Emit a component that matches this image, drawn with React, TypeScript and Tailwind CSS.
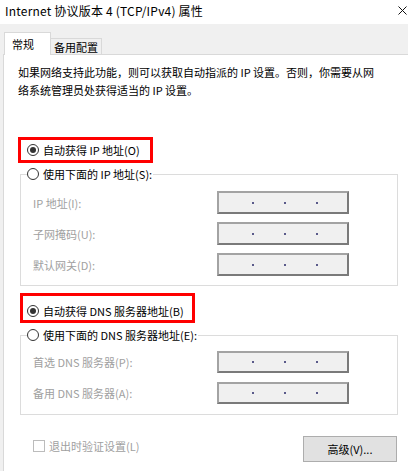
import React from "react";

function Radio({ checked }: { checked?: boolean }) {
  return (
    <span className="w-[12px] h-[12px] rounded-full border border-[#333333] bg-white flex items-center justify-center shrink-0">
      {checked && <span className="w-[6px] h-[6px] rounded-full bg-[#333333]" />}
    </span>
  );
}

function IpBox({ h }: { h: string }) {
  return (
    <div
      className={`w-[132px] ${h} bg-[#f0f0f0] border-2 border-[#a3a3a3] border-r-[#7a7a7a] border-b-[#7a7a7a] flex items-center pl-[33px] gap-[30px]`}
    >
      <span className="w-[2px] h-[2px] bg-[#5a5a8a]" />
      <span className="w-[2px] h-[2px] bg-[#5a5a8a]" />
      <span className="w-[2px] h-[2px] bg-[#5a5a8a]" />
    </div>
  );
}

export default function App() {
  return (
    <div className="w-[408px] h-[471px] overflow-hidden bg-[#f0f0f0] text-black text-[11px] leading-[16px] font-['Noto_Sans_CJK_SC',sans-serif]">
      {/* title bar */}
      <div className="h-[24px] bg-white flex items-center justify-between pl-[5px] pr-[1px]">
        <span className="text-[12px] leading-[16px] -mt-[2px] tracking-[0.2px]">Internet 协议版本 4 (TCP/IPv4) 属性</span>
        <svg width="9" height="9" viewBox="0 0 9 9" className="-mt-[4px]">
          <path d="M0.5 0.5 L8.5 8.5 M8.5 0.5 L0.5 8.5" stroke="#111" strokeWidth="1" />
        </svg>
      </div>

      {/* tabs */}
      <div className="h-[30px] flex items-end pl-[4px]">
        <div className="relative z-10 -mb-px h-[23px] w-[47px] bg-white border border-b-0 border-[#d9d9d9] pl-[7px] pt-[3px]">
          常规
        </div>
        <div className="h-[16px] w-[51px] bg-[#f0f0f0] border border-l-0 border-b-0 border-[#d9d9d9] flex items-center justify-center">
          备用配置
        </div>
      </div>

      {/* panel */}
      <div className="ml-[3px] h-[420px] bg-white border-t border-l border-[#d9d9d9] pl-[14px] pt-[8px]">
        <p className="leading-[18px] w-[360px]">
          如果网络支持此功能，则可以获取自动指派的 IP 设置。否则，你需要从网络系统管理员处获得适当的 IP 设置。
        </p>

        <div className="mt-[38px] w-[135px] h-[26px] border-[3px] border-[#ff0000] pl-[6px] pt-[2px]">
          <div className="h-[16px] flex items-center gap-[4px]">
            <Radio checked />
            <span>自动获得 IP 地址(O)</span>
          </div>
        </div>

        <fieldset className="mt-[3px] ml-[2px] w-[378px] border border-[#dcdcdc] pb-[9px]">
          <legend className="ml-[6px] h-[16px] flex items-center gap-[4px] pr-[1px]">
            <Radio />
            <span>使用下面的 IP 地址(S):</span>
          </legend>
          <div className="mt-[9px] flex flex-col gap-[8px]">
            <div className="flex items-center">
              <span className="w-[196px] pl-[12px] text-[#a0a0a0]">IP 地址(I):</span>
              <IpBox h="h-[23px]" />
            </div>
            <div className="flex items-center">
              <span className="w-[196px] pl-[12px] text-[#a0a0a0]">子网掩码(U):</span>
              <IpBox h="h-[23px]" />
            </div>
            <div className="flex items-center">
              <span className="w-[196px] pl-[12px] text-[#a0a0a0]">默认网关(D):</span>
              <IpBox h="h-[23px]" />
            </div>
          </div>
        </fieldset>

        <div className="mt-[7px] ml-[2px] w-[175px] h-[30px] border-[3px] border-[#ff0000] pl-[4px] pt-[7px]">
          <div className="h-[16px] flex items-center gap-[4px]">
            <Radio checked />
            <span>自动获得 DNS 服务器地址(B)</span>
          </div>
        </div>

        <fieldset className="mt-[4px] ml-[2px] w-[378px] border border-[#dcdcdc] pb-[10px]">
          <legend className="ml-[6px] h-[16px] flex items-center gap-[4px] pr-[1px]">
            <Radio />
            <span>使用下面的 DNS 服务器地址(E):</span>
          </legend>
          <div className="mt-[8px] flex flex-col gap-[9px]">
            <div className="flex items-center">
              <span className="w-[196px] pl-[12px] text-[#a0a0a0]">首选 DNS 服务器(P):</span>
              <IpBox h="h-[22px]" />
            </div>
            <div className="flex items-center">
              <span className="w-[196px] pl-[12px] text-[#a0a0a0]">备用 DNS 服务器(A):</span>
              <IpBox h="h-[22px]" />
            </div>
          </div>
        </fieldset>

        <div className="mt-[21px] w-[379px] flex justify-between items-start">
          <div className="ml-[15px] mt-[2px] flex items-center gap-[4px] text-[#a0a0a0]">
            <span className="w-[12px] h-[12px] border border-[#bcbcbc] bg-white" />
            <span>退出时验证设置(L)</span>
          </div>
          <button className="w-[94px] h-[26px] bg-[#e1e1e1] border border-[#adadad] text-black">
            高级(V)...
          </button>
        </div>
      </div>
    </div>
  );
}
